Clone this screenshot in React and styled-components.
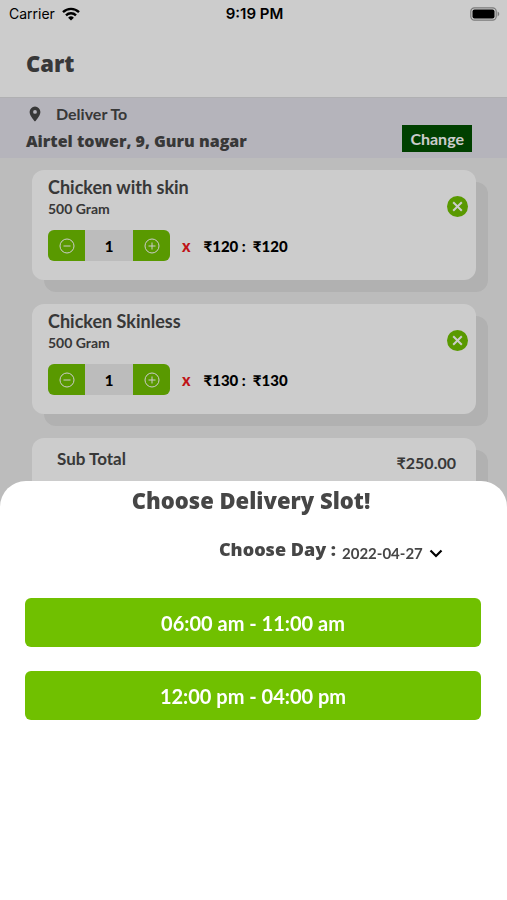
import React, { useState } from "react";
import styled, { createGlobalStyle } from "styled-components";

const headingFont = `"Gill Sans", "Open Sans", Lato, sans-serif`;

const GlobalStyle = createGlobalStyle`
  *, *::before, *::after { box-sizing: border-box; }
  body {
    margin: 0;
    background: #ececec;
    color: #464646;
    font-family: "Gill Sans", Lato, "Open Sans", sans-serif;
    overflow: hidden;
  }
  h1, h2, h3, p { margin: 0; }
  button, select { font-family: inherit; border: 0; padding: 0; cursor: pointer; }
`;

const Screen = styled.div`
  height: 100vh;
  overflow: hidden;
`;

const StatusBar = styled.div`
  display: grid;
  grid-template-columns: 1fr auto 1fr;
  align-items: center;
  height: 28px;
  padding: 0 7px 0 9px;
  background: #fff;
  color: #000;
  font: 400 14px/28px Inter, sans-serif;
`;

const Carrier = styled.span`
  display: flex;
  align-items: center;
  gap: 7px;
`;

const Clock = styled.time`
  font-size: 15px;
  font-weight: 600;
`;

const BatterySlot = styled.span`
  display: flex;
  justify-content: flex-end;
`;

const Header = styled.header`
  display: flex;
  align-items: center;
  height: 70px;
  padding: 0 26px;
  background: #fff;
  border-bottom: 1px solid #dcdcdf;
`;

const PageTitle = styled.h1`
  font-family: ${headingFont};
  font-size: 22px;
  line-height: 28px;
  font-weight: 800;
`;

const AddressBar = styled.section`
  display: flex;
  align-items: flex-end;
  justify-content: space-between;
  padding: 3px 35px 5px 26px;
  background: #e3e1ea;
`;

const DeliverTo = styled.p`
  display: flex;
  align-items: center;
  gap: 13px;
  padding-left: 1px;
  font-size: 16px;
  line-height: 26px;
  font-weight: 700;
`;

const Address = styled.p`
  padding-top: 2px;
  font-family: ${headingFont};
  font-size: 16px;
  line-height: 24px;
  font-weight: 800;
`;

const ChangeButton = styled.button`
  height: 27px;
  margin-bottom: 1px;
  padding: 0 8px;
  background: #005000;
  color: #fff;
  font-size: 16px;
  line-height: 27px;
  font-weight: 700;
`;

const CardList = styled.main`
  display: grid;
  gap: 24px;
  padding: 12px 31px 24px 32px;
`;

const Card = styled.article`
  display: flex;
  justify-content: space-between;
  min-height: 110px;
  padding: 6px 8px 19px 16px;
  background: #fff;
  border-radius: 12px;
  box-shadow: 12px 12px 0 #dedede;
`;

const TotalCard = styled(Card)`
  padding: 10px 20px 10px 25px;
`;

const ItemName = styled.h2`
  font-size: 18px;
  line-height: 22px;
  font-weight: 700;
`;

const ItemWeight = styled.p`
  font-size: 14px;
  line-height: 22px;
  font-weight: 700;
`;

const ItemRow = styled.div`
  display: flex;
  align-items: center;
  margin-top: 10px;
  color: #000;
  font-size: 15px;
  line-height: 28px;
  font-weight: 700;
`;

const Stepper = styled.div`
  display: grid;
  grid-template-columns: 37px 48px 37px;
  height: 31px;
  overflow: hidden;
  border-radius: 6px;
  background: #ececec;
`;

const StepButton = styled.button`
  display: grid;
  place-items: center;
  background: #70c000;
  color: #fff;
`;

const Quantity = styled.output`
  display: grid;
  place-items: center;
  font-weight: 900;
`;

const Times = styled.span`
  margin: 0 13px 0 12px;
  color: #f01820;
  font-size: 16px;
  font-weight: 900;
`;

const Price = styled.span`
  margin-right: 7px;
  font-weight: 900;
`;

const RemoveButton = styled.button`
  display: grid;
  place-items: center;
  width: 21px;
  height: 21px;
  margin-top: 20px;
  border-radius: 50%;
  background: #70c000;
  color: #fff;
`;

const TotalLabel = styled.span`
  font-size: 17px;
  line-height: 22px;
  font-weight: 700;
`;

const TotalValue = styled(TotalLabel)`
  margin-top: 4px;
  font-size: 16px;
`;

const Backdrop = styled.div`
  position: fixed;
  inset: 0;
  display: flex;
  align-items: flex-end;
  background: rgba(0, 0, 0, 0.2);
`;

const Sheet = styled.section`
  width: 100%;
  min-height: calc(50vh - 31px);
  padding: 4px 26px 24px 25px;
  border-radius: 26px 26px 0 0;
  background: #fff;
`;

const SheetTitle = styled.h2`
  padding-right: 4px;
  text-align: center;
  font-family: ${headingFont};
  font-size: 22px;
  line-height: 30px;
  font-weight: 800;
`;

const DayRow = styled.div`
  display: flex;
  justify-content: flex-end;
  margin: 21px 38px 0 0;
`;

const DayLabel = styled.label`
  font-family: ${headingFont};
  font-size: 18px;
  line-height: 26px;
  font-weight: 800;
`;

const DayPicker = styled.span`
  display: grid;
  grid-template-columns: auto 14px;
  align-items: center;
  gap: 6px;
  margin: 4px 0 0 6px;
  color: #000;
`;

const DaySelect = styled.select`
  appearance: none;
  background: transparent;
  color: #464646;
  font-size: 15px;
  line-height: 26px;
  font-weight: 700;
`;

const SlotList = styled.div`
  display: grid;
  gap: 24px;
  margin-top: 32px;
`;

const SlotButton = styled.button`
  padding: 1px 0 0;
  border-radius: 6px;
  background: #70c000;
  color: #fff;
  font-size: 20px;
  line-height: 48px;
  font-weight: 700;
`;

const WifiIcon = () => (
  <svg width="18" height="14" viewBox="0 0 18 14" fill="none" stroke="#000" strokeWidth="2.4" aria-hidden="true">
    <path d="M1 5.1a11.6 11.6 0 0 1 16 0" />
    <path d="M4 8.3a7.2 7.2 0 0 1 10 0" />
    <path d="M9 13.6 6.1 10.7a4.1 4.1 0 0 1 5.8 0Z" fill="#000" stroke="none" />
  </svg>
);

const BatteryIcon = () => (
  <svg width="30" height="14" viewBox="0 0 30 14" aria-hidden="true">
    <rect x="0.8" y="0.8" width="25.4" height="12.4" rx="3.6" fill="none" stroke="#999" strokeWidth="1.2" />
    <rect x="2.5" y="2.5" width="22" height="9" rx="2" fill="#000" />
    <path d="M27.6 4.6c2.2.7 2.2 4.1 0 4.8Z" fill="#999" />
  </svg>
);

const PinIcon = () => (
  <svg width="16" height="16" viewBox="0 0 16 16" fill="#464646" aria-hidden="true">
    <path
      fillRule="evenodd"
      d="M8 .6a5.4 5.4 0 0 0-5.4 5.4C2.6 9.900 8 15.600 8 15.600s5.400-5.700 5.400-9.600A5.400 5.400 0 0 0 8 .6Zm0 7.200a1.900 1.900 0 1 1 0-3.800 1.900 1.900 0 0 1 0 3.800Z"
    />
  </svg>
);

const StepIcon = ({ plus }) => (
  <svg width="16" height="16" viewBox="0 0 16 16" fill="none" stroke="currentColor" strokeWidth="1" aria-hidden="true">
    <circle cx="8" cy="8" r="7" />
    <path d={plus ? "M4.500 8h7M8 4.500v7" : "M4.500 8h7"} />
  </svg>
);

const CrossIcon = () => (
  <svg width="21" height="21" viewBox="0 0 21 21" fill="none" stroke="currentColor" strokeWidth="2" aria-hidden="true">
    <path d="m6.200 6.200 8.600 8.600M14.800 6.200l-8.600 8.600" />
  </svg>
);

const ChevronIcon = () => (
  <svg width="14" height="10" viewBox="0 0 14 10" fill="none" stroke="currentColor" strokeWidth="2.200" aria-hidden="true">
    <path d="m1.500 2.500 5.500 5.500 5.500-5.500" />
  </svg>
);

const startItems = [
  { id: 1, name: "Chicken with skin", weight: "500 Gram", price: 120, quantity: 1 },
  { id: 2, name: "Chicken Skinless", weight: "500 Gram", price: 130, quantity: 1 },
];

const slots = ["06:00 am - 11:00 am", "12:00 pm - 04:00 pm"];

function CartItem({ item, onStep, onRemove }) {
  return (
    <Card>
      <div>
        <ItemName>{item.name}</ItemName>
        <ItemWeight>{item.weight}</ItemWeight>
        <ItemRow>
          <Stepper>
            <StepButton type="button" aria-label="Decrease quantity" onClick={() => onStep(-1)}>
              <StepIcon />
            </StepButton>
            <Quantity>{item.quantity}</Quantity>
            <StepButton type="button" aria-label="Increase quantity" onClick={() => onStep(1)}>
              <StepIcon plus />
            </StepButton>
          </Stepper>
          <Times>x</Times>
          <Price>₹{item.price} :</Price>
          <Price>₹{item.price * item.quantity}</Price>
        </ItemRow>
      </div>
      <RemoveButton type="button" aria-label={`Remove ${item.name}`} onClick={onRemove}>
        <CrossIcon />
      </RemoveButton>
    </Card>
  );
}

export default function App() {
  const [items, setItems] = useState(startItems);
  const [day, setDay] = useState("2022-04-27");
  const total = items.reduce((sum, item) => sum + item.price * item.quantity, 0);

  const step = (id, by) =>
    setItems((list) =>
      list.map((item) => (item.id === id ? { ...item, quantity: Math.max(1, item.quantity + by) } : item))
    );

  return (
    <>
      <GlobalStyle />
      <Screen>
        <StatusBar>
          <Carrier>
            Carrier <WifiIcon />
          </Carrier>
          <Clock>9:19 PM</Clock>
          <BatterySlot>
            <BatteryIcon />
          </BatterySlot>
        </StatusBar>
        <Header>
          <PageTitle>Cart</PageTitle>
        </Header>
        <AddressBar>
          <div>
            <DeliverTo>
              <PinIcon /> Deliver To
            </DeliverTo>
            <Address>Airtel tower, 9, Guru nagar</Address>
          </div>
          <ChangeButton type="button">Change</ChangeButton>
        </AddressBar>
        <CardList>
          {items.map((item) => (
            <CartItem
              key={item.id}
              item={item}
              onStep={(by) => step(item.id, by)}
              onRemove={() => setItems((list) => list.filter((other) => other.id !== item.id))}
            />
          ))}
          <TotalCard>
            <TotalLabel>Sub Total</TotalLabel>
            <TotalValue>₹{total.toFixed(2)}</TotalValue>
          </TotalCard>
        </CardList>
      </Screen>
      <Backdrop>
        <Sheet role="dialog" aria-labelledby="slot-title">
          <SheetTitle id="slot-title">Choose Delivery Slot!</SheetTitle>
          <DayRow>
            <DayLabel htmlFor="day">Choose Day :</DayLabel>
            <DayPicker>
              <DaySelect id="day" value={day} onChange={(event) => setDay(event.target.value)}>
                <option>2022-04-27</option>
                <option>2022-04-28</option>
              </DaySelect>
              <ChevronIcon />
            </DayPicker>
          </DayRow>
          <SlotList>
            {slots.map((slot) => (
              <SlotButton type="button" key={slot}>
                {slot}
              </SlotButton>
            ))}
          </SlotList>
        </Sheet>
      </Backdrop>
    </>
  );
}
